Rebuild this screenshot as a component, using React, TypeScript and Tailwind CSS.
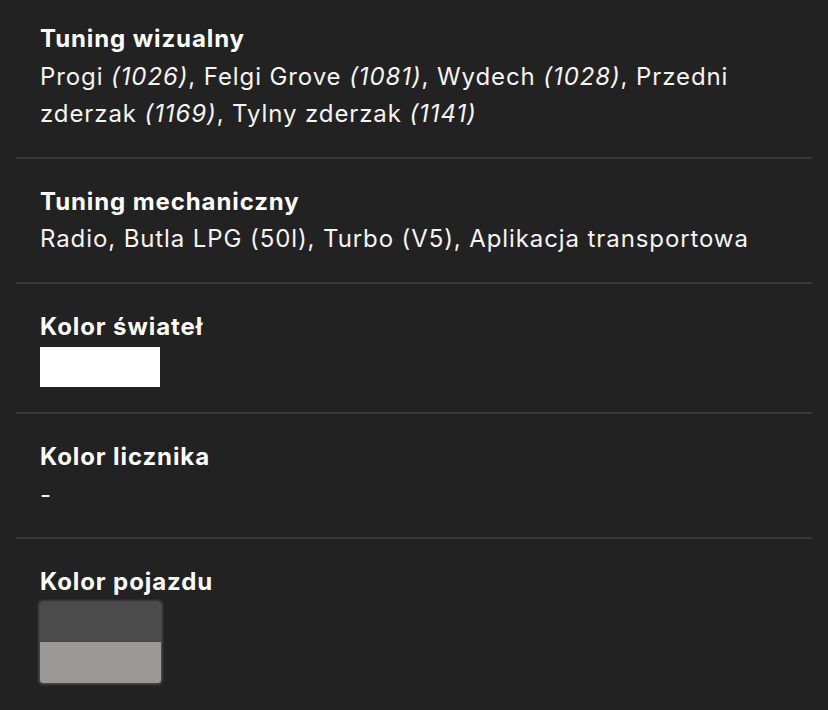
import type { ReactNode } from 'react';

type Section = {
  title: string;
  body: ReactNode;
};

// Vehicle details list: a label on top, its value below, rows split by thin rules
function Swatch({ colors }: { colors: string[] }) {
  if (colors.length === 1) {
    return <div className="mt-[2px] mb-px h-[40px] w-[120px]" style={{ background: colors[0] }} />;
  }
  return (
    <div className="mt-px flex w-[121px] flex-col overflow-hidden rounded-[3px] shadow-[0_0_3px_1px_rgba(255,255,255,0.28)]">
      {colors.map((c) => (
        <div key={c} className="h-[40.5px]" style={{ background: c }} />
      ))}
    </div>
  );
}

const Num = ({ children }: { children: ReactNode }) => <i className="italic">{children}</i>;

const sections: Section[] = [
  {
    title: 'Tuning wizualny',
    body: (
      <p>
        Progi <Num>(1026)</Num>, Felgi Grove <Num>(1081)</Num>, Wydech <Num>(1028)</Num>, Przedni zderzak{' '}
        <Num>(1169)</Num>, Tylny zderzak <Num>(1141)</Num>
      </p>
    ),
  },
  {
    title: 'Tuning mechaniczny',
    body: <p>Radio, Butla LPG (50l), Turbo (V5), Aplikacja transportowa</p>,
  },
  {
    title: 'Kolor świateł',
    body: <Swatch colors={['#ffffff']} />,
  },
  {
    title: 'Kolor licznika',
    body: <p>-</p>,
  },
  {
    title: 'Kolor pojazdu',
    body: <Swatch colors={['#4b4b4b', '#9a9995']} />,
  },
];

export default function App() {
  return (
    <div
      className="min-h-screen bg-[#222222] px-4 text-[24px] leading-[37.5px] tracking-[0.9px] text-[#f4f4f4]"
      style={{ fontFamily: 'Inter, "Noto Sans", sans-serif' }}
    >
      {sections.map((s, i) => (
        <div
          key={s.title}
          className={
            i === 0
              ? 'border-b-2 border-[#393939] px-6 pt-[20px] pb-6'
              : i === sections.length - 1
                ? 'px-6 py-6'
                : 'border-b-2 border-[#393939] px-6 py-6'
          }
        >
          <h3 className="font-bold text-white">{s.title}</h3>
          {s.body}
        </div>
      ))}
    </div>
  );
}
